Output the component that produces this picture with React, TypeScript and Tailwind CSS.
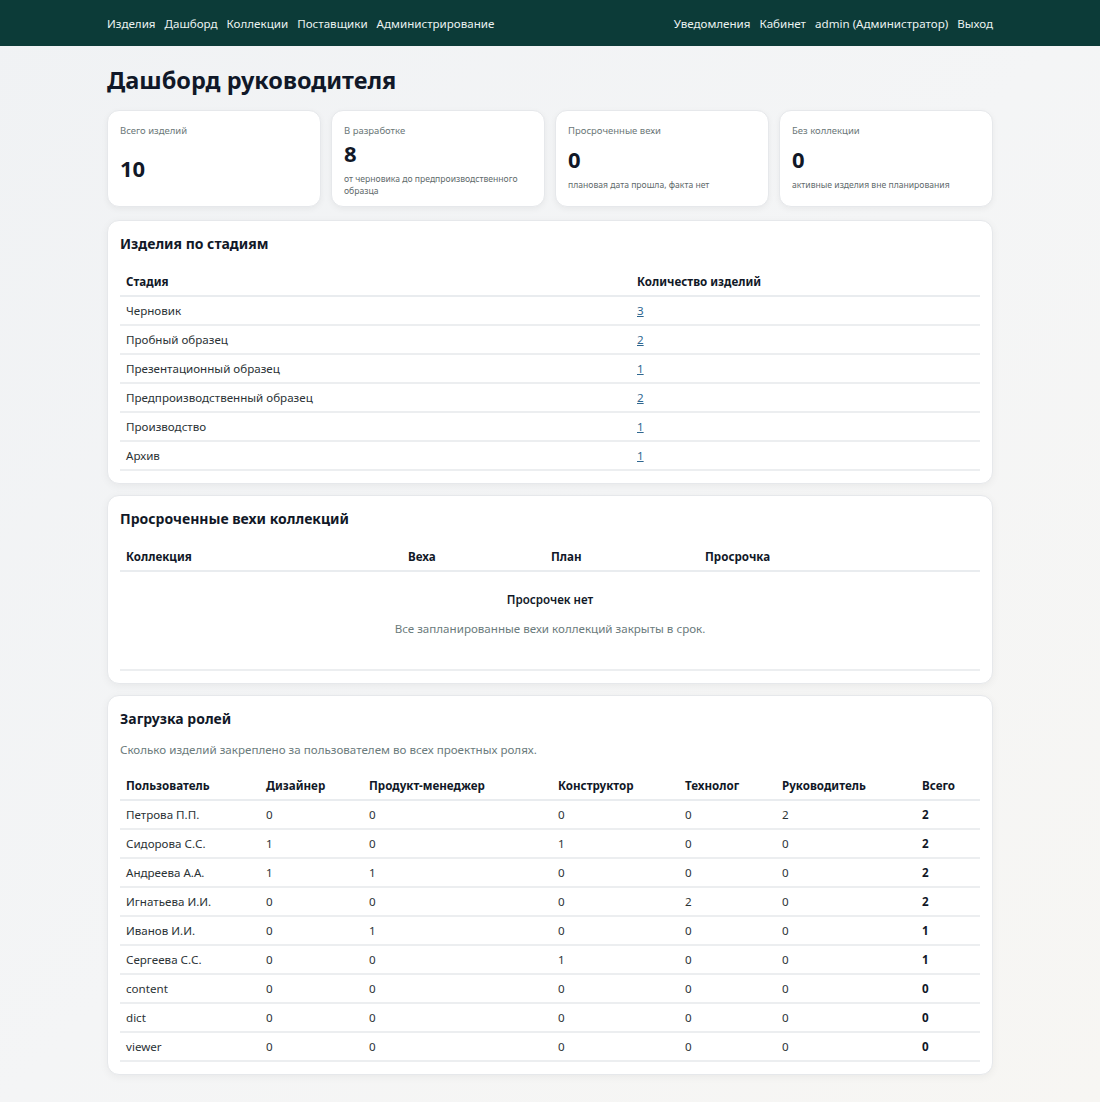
import React from "react";

const font = { fontFamily: '"Noto Sans", "Open Sans", Arial, sans-serif' };

function StatCard({ label, value, sub }: { label: string; value: string; sub: string }) {
  return (
    <div className="h-[97px] bg-white rounded-xl border border-[#e6e8eb] shadow-[0_2px_6px_rgba(0,0,0,0.05)] px-[12px] pt-[13px] pb-[8px] flex flex-col">
      <div className="text-[9.5px] leading-[14px] text-[#6b7778]">{label}</div>
      <div className="flex-1 flex flex-col justify-center">
        <div className="text-[22px] leading-[28px] font-bold text-[#111827]">{value}</div>
        {sub && <div className="mt-[6px] text-[8.6px] leading-[12px] text-[#5f6b6c] pr-[4px]">{sub}</div>}
      </div>
    </div>
  );
}

function Panel({ children }: { children: React.ReactNode }) {
  return (
    <div className="bg-white rounded-xl border border-[#e6e8eb] shadow-[0_2px_8px_rgba(0,0,0,0.05)] px-[12px] pt-[13px] pb-[12px]">
      {children}
    </div>
  );
}

const th = "text-left font-bold text-[11.6px] text-[#111827] px-[6px] h-[27px] border-b-2 border-[#e9ecef]";
const td = "text-[11.6px] text-[#2b3336] px-[6px] h-[29px] border-b-2 border-[#eceef0]";

const stages: [string, string][] = [
  ["Черновик", "3"],
  ["Пробный образец", "2"],
  ["Презентационный образец", "1"],
  ["Предпроизводственный образец", "2"],
  ["Производство", "1"],
  ["Архив", "1"],
];

const roles: [string, number, number, number, number, number, number][] = [
  ["Петрова П.П.", 0, 0, 0, 0, 2, 2],
  ["Сидорова С.С.", 1, 0, 1, 0, 0, 2],
  ["Андреева А.А.", 1, 1, 0, 0, 0, 2],
  ["Игнатьева И.И.", 0, 0, 0, 2, 0, 2],
  ["Иванов И.И.", 0, 1, 0, 0, 0, 1],
  ["Сергеева С.С.", 0, 0, 1, 0, 0, 1],
  ["content", 0, 0, 0, 0, 0, 0],
  ["dict", 0, 0, 0, 0, 0, 0],
  ["viewer", 0, 0, 0, 0, 0, 0],
];

export default function App() {
  return (
    <div style={font} className="min-h-[1102px] bg-gradient-to-br from-[#f0f2f4] via-[#f4f5f6] to-[#f7f6f3]">
      <nav className="h-[46px] bg-[#0c3b38] text-[#eaf2f0] text-[11.6px]">
        <div className="w-[886px] mx-auto h-full flex items-center justify-between pt-[1px]">
          <div className="flex gap-[9px]">
            <span>Изделия</span>
            <span>Дашборд</span>
            <span>Коллекции</span>
            <span>Поставщики</span>
            <span>Администрирование</span>
          </div>
          <div className="flex gap-[9px]">
            <span>Уведомления</span>
            <span>Кабинет</span>
            <span>admin (Администратор)</span>
            <span>Выход</span>
          </div>
        </div>
      </nav>

      <main className="w-[886px] mx-auto">
        <h1 className="text-[23.5px] leading-[32px] font-bold text-[#101828] pt-[18px] pb-[14px]">Дашборд руководителя</h1>

        <div className="grid grid-cols-4 gap-[10px]">
          <StatCard label="Всего изделий" value="10" sub="" />
          <StatCard label="В разработке" value="8" sub="от черновика до предпроизводственного образца" />
          <StatCard label="Просроченные вехи" value="0" sub="плановая дата прошла, факта нет" />
          <StatCard label="Без коллекции" value="0" sub="активные изделия вне планирования" />
        </div>

        <div className="mt-[13px] flex flex-col gap-[11px] pb-[28px]">
          <Panel>
            <h2 className="text-[14px] leading-[20px] font-bold text-[#111827] mb-[15px]">Изделия по стадиям</h2>
            <table className="w-full table-fixed border-collapse">
              <colgroup>
                <col className="w-[511px]" />
                <col />
              </colgroup>
              <thead>
                <tr>
                  <th className={th}>Стадия</th>
                  <th className={th}>Количество изделий</th>
                </tr>
              </thead>
              <tbody>
                {stages.map(([s, n]) => (
                  <tr key={s}>
                    <td className={td}>{s}</td>
                    <td className={td}>
                      <a href="#" className="text-[#2f6790] underline">{n}</a>
                    </td>
                  </tr>
                ))}
              </tbody>
            </table>
          </Panel>

          <Panel>
            <h2 className="text-[14px] leading-[20px] font-bold text-[#111827] mb-[15px]">Просроченные вехи коллекций</h2>
            <table className="w-full table-fixed border-collapse">
              <colgroup>
                <col className="w-[282px]" />
                <col className="w-[143px]" />
                <col className="w-[154px]" />
                <col />
              </colgroup>
              <thead>
                <tr>
                  <th className={th}>Коллекция</th>
                  <th className={th}>Веха</th>
                  <th className={th}>План</th>
                  <th className={th}>Просрочка</th>
                </tr>
              </thead>
              <tbody>
                <tr>
                  <td colSpan={4} className="border-b-2 border-[#eceef0] h-[99px] text-center pt-[10px] pb-[22px]">
                    <div className="text-[11.6px] font-semibold text-[#111827] leading-[18px]">Просрочек нет</div>
                    <div className="text-[11.6px] text-[#6b7b7c] leading-[18px] mt-[11px]">Все запланированные вехи коллекций закрыты в срок.</div>
                  </td>
                </tr>
              </tbody>
            </table>
          </Panel>

          <Panel>
            <h2 className="text-[14px] leading-[20px] font-bold text-[#111827] mb-[12px]">Загрузка ролей</h2>
            <p className="text-[11.6px] leading-[18px] text-[#6b7b7c] mb-[14px]">Сколько изделий закреплено за пользователем во всех проектных ролях.</p>
            <table className="w-full table-fixed border-collapse">
              <colgroup>
                <col className="w-[140px]" />
                <col className="w-[103px]" />
                <col className="w-[189px]" />
                <col className="w-[127px]" />
                <col className="w-[97px]" />
                <col className="w-[140px]" />
                <col />
              </colgroup>
              <thead>
                <tr>
                  <th className={th}>Пользователь</th>
                  <th className={th}>Дизайнер</th>
                  <th className={th}>Продукт-менеджер</th>
                  <th className={th}>Конструктор</th>
                  <th className={th}>Технолог</th>
                  <th className={th}>Руководитель</th>
                  <th className={th}>Всего</th>
                </tr>
              </thead>
              <tbody>
                {roles.map((r) => (
                  <tr key={r[0]}>
                    <td className={td}>{r[0]}</td>
                    <td className={td}>{r[1]}</td>
                    <td className={td}>{r[2]}</td>
                    <td className={td}>{r[3]}</td>
                    <td className={td}>{r[4]}</td>
                    <td className={td}>{r[5]}</td>
                    <td className={td + " font-bold text-[#111827]"}>{r[6]}</td>
                  </tr>
                ))}
              </tbody>
            </table>
          </Panel>
        </div>
      </main>
    </div>
  );
}
